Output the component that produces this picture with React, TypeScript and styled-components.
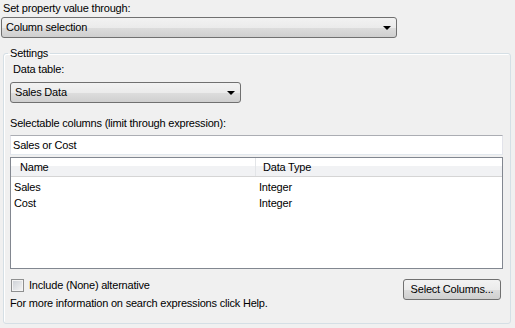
import React from "react";
import styled, { createGlobalStyle } from "styled-components";

const GlobalStyle = createGlobalStyle`
  html, body {
    margin: 0;
    padding: 0;
    background: #f0f0f0;
  }
  body {
    font-family: "Liberation Sans", Arial, sans-serif;
    font-size: 11px;
    letter-spacing: -0.2px;
    color: #000;
  }
`;

const Page = styled.div`
  width: 515px;
  height: 328px;
  box-sizing: border-box;
  padding: 2px 4px 0 1px;
  display: flex;
  flex-direction: column;
  overflow: hidden;
`;

const Label = styled.div<{ $indent?: number; $top?: number }>`
  line-height: 13px;
  height: 13px;
  padding-left: ${(p) => p.$indent ?? 0}px;
  margin-top: ${(p) => p.$top ?? 0}px;
  white-space: nowrap;
`;

const Combo = styled.div<{ $width: number; $top: number }>`
  box-sizing: border-box;
  width: ${(p) => p.$width}px;
  height: 21px;
  margin-top: ${(p) => p.$top}px;
  border: 1px solid #707070;
  border-radius: 3px;
  background: linear-gradient(#f2f2f2 0%, #ebebeb 50%, #dddddd 51%, #cfcfcf 100%);
  display: flex;
  align-items: center;
  padding-left: 4px;
  padding-right: 5px;
  line-height: 13px;
`;

const ComboText = styled.span`
  flex: 1;
`;

const Arrow = styled.span`
  width: 0;
  height: 0;
  border-left: 4px solid transparent;
  border-right: 4px solid transparent;
  border-top: 4px solid #000;
  margin-top: 1px;
`;

const Group = styled.fieldset`
  box-sizing: border-box;
  margin: 9px 0 0 2px;
  width: 508px;
  flex: 1;
  max-height: 277px;
  border: 1px solid #d5dfe5;
  border-radius: 3px;
  box-shadow: inset 1px 1px 0 #fff;
  padding: 3px 7px 0 6px;
  display: flex;
  flex-direction: column;
  min-width: 0;
`;

const Legend = styled.legend`
  padding: 0 2px;
  margin-left: -2px;
  line-height: 13px;
`;

const Search = styled.div`
  box-sizing: border-box;
  height: 20px;
  margin-top: 5px;
  background: #fff;
  border: 1px solid #e2e3ea;
  border-top-color: #abadb3;
  border-bottom-color: #e3e9ef;
  display: flex;
  align-items: center;
  padding-left: 2px;
`;

const List = styled.div`
  box-sizing: border-box;
  height: 112px;
  margin-top: 2px;
  background: #fff;
  border: 1px solid #828790;
  display: flex;
  flex-direction: column;
`;

const HeaderRow = styled.div`
  display: grid;
  grid-template-columns: 244px 1fr;
  height: 19px;
  background: linear-gradient(#ffffff 0%, #ffffff 45%, #f1f2f4 46%, #f1f2f4 100%);
  border-bottom: 1px solid #d5d5d5;
  box-sizing: border-box;
`;

const HeaderCell = styled.div<{ $pad: number; $divider?: boolean }>`
  display: flex;
  align-items: center;
  padding-left: ${(p) => p.$pad}px;
  border-left: ${(p) => (p.$divider ? "1px solid #e3e5e8" : "none")};
`;

const Rows = styled.div`
  padding-top: 2px;
`;

const Row = styled.div`
  display: grid;
  grid-template-columns: 244px 1fr;
  height: 16px;
  align-items: center;
`;

const Cell = styled.div<{ $pad: number }>`
  padding-left: ${(p) => p.$pad}px;
`;

const Bottom = styled.div`
  display: flex;
  justify-content: space-between;
  align-items: flex-start;
  margin-top: 10px;
`;

const Left = styled.div`
  display: flex;
  flex-direction: column;
  gap: 5px;
`;

const CheckRow = styled.label`
  display: flex;
  align-items: center;
  gap: 5px;
  height: 13px;
  padding-left: 1px;
  line-height: 13px;
`;

const CheckBox = styled.span`
  box-sizing: border-box;
  width: 13px;
  height: 13px;
  border: 1px solid #8e8f8f;
  background: linear-gradient(135deg, #cbcfd5 0%, #f6f6f6 100%);
  box-shadow: inset 0 0 0 1px #f4f4f4;
`;

const Button = styled.div`
  box-sizing: border-box;
  width: 98px;
  height: 21px;
  margin-right: 2px;
  border: 1px solid #707070;
  border-radius: 3px;
  background: linear-gradient(#f2f2f2 0%, #ebebeb 50%, #dddddd 51%, #cfcfcf 100%);
  display: flex;
  align-items: center;
  justify-content: center;
  line-height: 13px;
`;

export default function App() {
  return (
    <>
      <GlobalStyle />
      <Page>
        <Label $indent={2}>Set property value through:</Label>
        <Combo $width={396} $top={2}>
          <ComboText>Column selection</ComboText>
          <Arrow />
        </Combo>
        <Group>
          <Legend>Settings</Legend>
          <Label $indent={3}>Data table:</Label>
          <Combo $width={231} $top={6}>
            <ComboText>Sales Data</ComboText>
            <Arrow />
          </Combo>
          <Label $top={14}>Selectable columns (limit through expression):</Label>
          <Search>Sales or Cost</Search>
          <List>
            <HeaderRow>
              <HeaderCell $pad={9}>Name</HeaderCell>
              <HeaderCell $pad={7} $divider>
                Data Type
              </HeaderCell>
            </HeaderRow>
            <Rows>
              <Row>
                <Cell $pad={3}>Sales</Cell>
                <Cell $pad={4}>Integer</Cell>
              </Row>
              <Row>
                <Cell $pad={3}>Cost</Cell>
                <Cell $pad={4}>Integer</Cell>
              </Row>
            </Rows>
          </List>
          <Bottom>
            <Left>
              <CheckRow>
                <CheckBox />
                Include (None) alternative
              </CheckRow>
              <Label>For more information on search expressions click Help.</Label>
            </Left>
            <Button>Select Columns...</Button>
          </Bottom>
        </Group>
      </Page>
    </>
  );
}
